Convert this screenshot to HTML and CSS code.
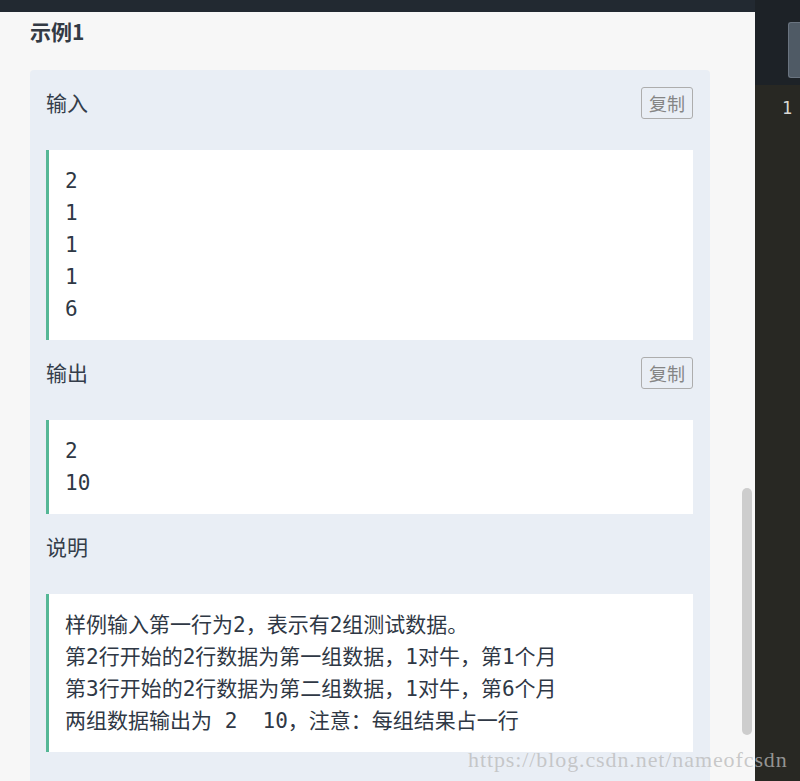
FILE: index.html
```html
<!DOCTYPE html>
<html lang="zh-CN">

<head>
    <meta charset="UTF-8">
    <meta name="viewport" content="width=device-width, initial-scale=1.0">
    <title>示例1</title>
    <link rel="stylesheet" href="styles.css">
</head>

<body>
    <div class="screen">
        <div class="problem">
            <div class="topbar"></div>
            <div class="problem-body">
                <div class="content">
                    <h2 class="example-title">示例1</h2>
                    <div class="example">
                        <div class="example-head">
                            <span>输入</span>
                            <button class="copy">复制</button>
                        </div>
                        <pre class="example-code">2
1
1
1
6</pre>

                        <div class="example-head">
                            <span>输出</span>
                            <button class="copy">复制</button>
                        </div>
                        <pre class="example-code">2
10</pre>

                        <div class="example-head">
                            <span>说明</span>
                        </div>
                        <pre class="example-code">样例输入第一行为2，表示有2组测试数据。
第2行开始的2行数据为第一组数据，1对牛，第1个月
第3行开始的2行数据为第二组数据，1对牛，第6个月
两组数据输出为 2  10，注意：每组结果占一行</pre>
                    </div>
                </div>
                <div class="scroll-track">
                    <div class="scroll-thumb"></div>
                </div>
            </div>
        </div>

        <div class="editor">
            <div class="editor-head">
                <div class="editor-tab"></div>
            </div>
            <div class="editor-body">
                <span class="line-no">1</span>
            </div>
        </div>

        <div class="watermark">https://blog.csdn.net/nameofcsdn</div>
    </div>
</body>

</html>
```

FILE: styles.css
```css
body {
    margin: 0;
    overflow: hidden;
    font-family: "Noto Sans CJK SC", "Noto Sans", sans-serif;
    color: #343d4a;
}

.screen {
    position: relative;
    display: flex;
    height: 781px;
    overflow: hidden;
}

/* left: problem statement */
.problem {
    width: 755px;
    display: flex;
    flex-direction: column;
    background: #f7f7f7;
}

.topbar {
    height: 12px;
    flex-shrink: 0;
    background: #222931;
}

.problem-body {
    flex: 1;
    min-height: 0;
    overflow: hidden;
    display: flex;
}

.content {
    flex: 1;
    padding: 0 30px;
}

.example-title {
    margin: 5px 0 25px;
    font-size: 21px;
    line-height: 28px;
    font-weight: bold;
    color: #333a44;
}

.example {
    background: #e9eef5;
    border-radius: 4px;
    padding: 0 17px 40px 16px;
}

.example-head {
    height: 80px;
    box-sizing: border-box;
    padding-top: 18px;
    display: flex;
    justify-content: space-between;
    align-items: flex-start;
    font-size: 21px;
    line-height: 28px;
}

.copy {
    height: 32px;
    padding: 0 7px;
    margin-top: -1px;
    background: transparent;
    border: 1px solid #adadad;
    border-radius: 3px;
    color: #858585;
    font-family: "Noto Sans CJK SC", sans-serif;
    font-size: 18px;
    cursor: pointer;
}

.example-code {
    margin: 0;
    background: #fff;
    border-left: 3px solid #55b796;
    padding: 15px 16px;
    font-family: "DejaVu Sans Mono", "Noto Sans CJK SC", monospace;
    font-size: 21px;
    line-height: 32px;
    white-space: pre-wrap;
    color: #2f3845;
}

.scroll-track {
    width: 15px;
    padding-left: 2px;
    box-sizing: border-box;
}

.scroll-thumb {
    width: 10px;
    height: 247px;
    margin-top: 476px;
    border-radius: 5px;
    background: #cdcdcd;
}

/* right: code editor */
.editor {
    flex: 1;
    display: flex;
    flex-direction: column;
    background: #282823;
}

.editor-head {
    height: 85px;
    flex-shrink: 0;
    background: #1d2227;
    padding: 22px 0 0 33px;
    box-sizing: border-box;
}

.editor-tab {
    height: 54px;
    background: #4f5a65;
    border: 1px solid #6a7480;
    border-right: none;
    border-radius: 3px 0 0 3px;
}

.editor-body {
    padding: 10px 0 0 27px;
}

.line-no {
    font-family: "DejaVu Sans Mono", monospace;
    font-size: 17px;
    line-height: 24px;
    color: #d8d8d4;
}

.watermark {
    position: absolute;
    left: 468px;
    top: 747px;
    font-family: "Liberation Serif", serif;
    font-size: 22px;
    letter-spacing: 0.9px;
    color: rgba(185, 185, 185, 0.75);
    white-space: nowrap;
}
```
